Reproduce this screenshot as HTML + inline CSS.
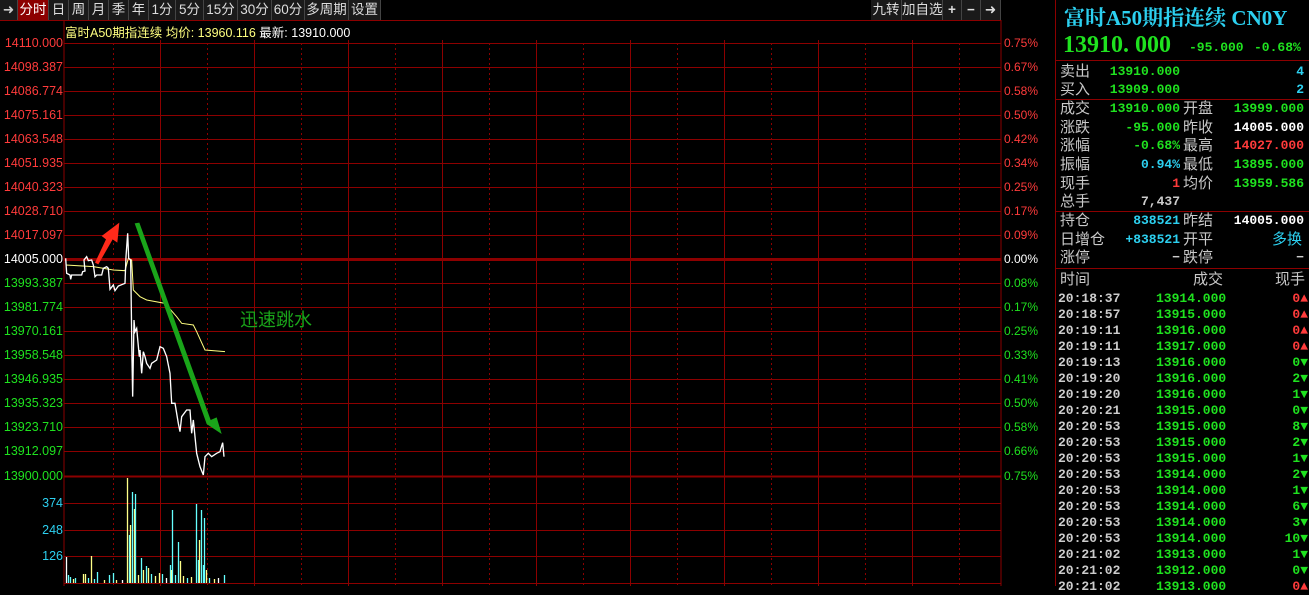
<!DOCTYPE html>
<html><head><meta charset="utf-8"><style>
*{margin:0;padding:0;box-sizing:border-box}
body{width:1309px;height:586px;background:#000;overflow:hidden;position:relative;font-family:"Liberation Sans","Noto Sans CJK SC",sans-serif;}
.t{position:absolute;white-space:nowrap}
.tb{position:absolute;top:0;height:20px;background:#1a1a1a;border-right:1px solid #444;color:#ddd;font-size:13.5px;line-height:20px;text-align:center;white-space:nowrap;overflow:hidden}
.ax{position:absolute;font-size:12.5px;line-height:14px;right:1246px;text-align:right}
.rx{position:absolute;font-size:12px;line-height:14px;left:1004px}
.lb{position:absolute;font-size:15px;color:#c8c8c8;line-height:18px;font-family:"Liberation Sans","WenQuanYi Zen Hei",sans-serif;white-space:nowrap}
.v{position:absolute;font-size:13px;font-weight:bold;line-height:18px;text-align:right;font-family:"Liberation Mono",monospace}
.g{color:#1fe21f}.r{color:#ff3b3b}.w{color:#fff}.c{color:#2cd0f0}
.hl{position:absolute;left:1056px;width:253px;height:1px;background:#8c0000}
</style></head><body>
<div class="tb" style="left:0;width:18px;color:#ccc">➜</div>
<div class="tb" style="left:18px;width:31px;background:#8c0000;color:#fff">分时</div>
<div class="tb" style="left:49px;width:20px">日</div>
<div class="tb" style="left:69px;width:20px">周</div>
<div class="tb" style="left:89px;width:20px">月</div>
<div class="tb" style="left:109px;width:20px">季</div>
<div class="tb" style="left:129px;width:20px">年</div>
<div class="tb" style="left:149px;width:27px">1分</div>
<div class="tb" style="left:176px;width:28px">5分</div>
<div class="tb" style="left:204px;width:34px">15分</div>
<div class="tb" style="left:238px;width:34px">30分</div>
<div class="tb" style="left:272px;width:33px">60分</div>
<div class="tb" style="left:305px;width:44px">多周期</div>
<div class="tb" style="left:349px;width:32px">设置</div>
<div class="tb" style="left:871px;width:31px">九转</div>
<div class="tb" style="left:902px;width:41px">加自选</div>
<div class="tb" style="left:943px;width:19px;font-weight:bold">+</div>
<div class="tb" style="left:962px;width:19px;font-weight:bold">−</div>
<div class="tb" style="left:981px;width:20px">➜</div>
<div style="position:absolute;left:0;top:20px;width:1001px;height:1px;background:#8c0000"></div>
<div class="t" style="left:65px;top:22px;font-size:12.5px;color:#ffff80">富时A50期指连续 均价: 13960.116 <span style="color:#fff">最新: 13910.000</span></div>

<svg style="position:absolute;left:0;top:0" width="1056" height="586">
<g stroke="#8c0000" stroke-width="1">
<line x1="64" y1="20" x2="64" y2="586"/>
<line x1="1001" y1="20" x2="1001" y2="586"/>
<line x1="1056" y1="0" x2="1056" y2="586" stroke-width="2"/>
<line x1="64" y1="43.5" x2="1001" y2="43.5"/><line x1="64" y1="67.5" x2="1001" y2="67.5"/><line x1="64" y1="91.5" x2="1001" y2="91.5"/><line x1="64" y1="115.5" x2="1001" y2="115.5"/><line x1="64" y1="139.5" x2="1001" y2="139.5"/><line x1="64" y1="163.5" x2="1001" y2="163.5"/><line x1="64" y1="187.5" x2="1001" y2="187.5"/><line x1="64" y1="211.5" x2="1001" y2="211.5"/><line x1="64" y1="235.5" x2="1001" y2="235.5"/>
<line x1="64" y1="259.5" x2="1001" y2="259.5" stroke-width="3"/>
<line x1="64" y1="283.5" x2="1001" y2="283.5"/><line x1="64" y1="307.5" x2="1001" y2="307.5"/><line x1="64" y1="331.5" x2="1001" y2="331.5"/><line x1="64" y1="355.5" x2="1001" y2="355.5"/><line x1="64" y1="379.5" x2="1001" y2="379.5"/><line x1="64" y1="403.5" x2="1001" y2="403.5"/><line x1="64" y1="427.5" x2="1001" y2="427.5"/><line x1="64" y1="451.5" x2="1001" y2="451.5"/>
<line x1="64" y1="476.5" x2="1001" y2="476.5" stroke-width="2"/>
<line x1="64" y1="503.5" x2="1001" y2="503.5"/><line x1="64" y1="530.5" x2="1001" y2="530.5"/><line x1="64" y1="556.5" x2="1001" y2="556.5"/><line x1="64" y1="583.5" x2="1001" y2="583.5"/>
<line x1="160.5" y1="40" x2="160.5" y2="586"/><line x1="254.5" y1="40" x2="254.5" y2="586"/><line x1="348.5" y1="40" x2="348.5" y2="586"/><line x1="442.5" y1="40" x2="442.5" y2="586"/><line x1="536.5" y1="40" x2="536.5" y2="586"/><line x1="630.5" y1="40" x2="630.5" y2="586"/><line x1="724.5" y1="40" x2="724.5" y2="586"/><line x1="818.5" y1="40" x2="818.5" y2="586"/><line x1="912.5" y1="40" x2="912.5" y2="586"/>
<g stroke-dasharray="2,3">
<line x1="113.5" y1="43" x2="113.5" y2="586"/><line x1="207.5" y1="43" x2="207.5" y2="586"/><line x1="301.5" y1="43" x2="301.5" y2="586"/><line x1="395.5" y1="43" x2="395.5" y2="586"/><line x1="489.5" y1="43" x2="489.5" y2="586"/><line x1="583.5" y1="43" x2="583.5" y2="586"/><line x1="677.5" y1="43" x2="677.5" y2="586"/><line x1="771.5" y1="43" x2="771.5" y2="586"/><line x1="865.5" y1="43" x2="865.5" y2="586"/><line x1="959.5" y1="43" x2="959.5" y2="586"/>
</g>
</g>
<g transform="translate(0,200) scale(0.33333)" fill="none">
<polyline stroke="#ffff80" stroke-width="3" points="197,195 280,200 340,210 375,212 385,175 395,180 400,270 420,290 440,300 495,310 530,350 545,370 580,375 590,395 615,450 675,455"/>
<polyline stroke="#fff" stroke-width="4" points="197,175 200,220 210,225 212,238 215,225 245,225 248,215 255,213 252,180 260,170 265,182 275,180 280,195 285,230 290,225 305,225 310,205 320,200 325,205 330,268 340,255 345,272 355,258 375,250 378,170 383,100 386,175 392,180 396,480 398,590 402,360 405,395 410,385 418,470 420,450 425,520 430,455 435,470 440,490 450,505 455,490 470,480 480,440 490,445 500,470 510,520 515,610 525,610 535,670 540,695 545,650 560,630 570,630 575,700 580,660 590,760 600,800 610,825 615,770 625,760 635,770 650,760 660,755 668,728 672,770"/>
<polygon fill="#ff2a1a" points="285,188 318,118 305,108 358,68 352,128 338,118 295,193"/>
<polygon fill="#1aa51a" points="404,70 418,68 632,660 650,652 665,702 620,672 618,666"/>
</g>
<g stroke-width="1.3">
<line x1="66.5" y1="583" x2="66.5" y2="557" stroke="#fff"/>
<line x1="68.5" y1="583" x2="68.5" y2="575" stroke="#6ff"/><line x1="70.5" y1="583" x2="70.5" y2="577" stroke="#6ff"/><line x1="73.5" y1="583" x2="73.5" y2="579" stroke="#ff8"/><line x1="75.5" y1="583" x2="75.5" y2="578" stroke="#6ff"/><line x1="83.5" y1="583" x2="83.5" y2="574" stroke="#ff8"/><line x1="85.5" y1="583" x2="85.5" y2="574" stroke="#ff8"/><line x1="88.5" y1="583" x2="88.5" y2="578" stroke="#6ff"/>
<line x1="91.5" y1="583" x2="91.5" y2="556" stroke="#ff8"/><line x1="94.5" y1="583" x2="94.5" y2="579" stroke="#6ff"/><line x1="97.5" y1="583" x2="97.5" y2="572" stroke="#6ff"/><line x1="104.5" y1="583" x2="104.5" y2="580" stroke="#ff8"/><line x1="109.5" y1="583" x2="109.5" y2="575" stroke="#6ff"/><line x1="113.5" y1="583" x2="113.5" y2="573" stroke="#6ff"/><line x1="116.5" y1="583" x2="116.5" y2="580" stroke="#ff8"/><line x1="122.5" y1="583" x2="122.5" y2="580" stroke="#fff"/>
<line x1="127.5" y1="583" x2="127.5" y2="478" stroke="#ff8"/><line x1="129.5" y1="583" x2="129.5" y2="535" stroke="#6ff"/><line x1="130.5" y1="583" x2="130.5" y2="525" stroke="#ff8"/><line x1="132.5" y1="583" x2="132.5" y2="492" stroke="#6ff"/><line x1="134.5" y1="583" x2="134.5" y2="509" stroke="#ff8"/><line x1="135.5" y1="583" x2="135.5" y2="494" stroke="#6ff"/><line x1="138.5" y1="583" x2="138.5" y2="575" stroke="#ff8"/>
<line x1="141.5" y1="583" x2="141.5" y2="558" stroke="#6ff"/><line x1="143.5" y1="583" x2="143.5" y2="570" stroke="#ff8"/><line x1="146.5" y1="583" x2="146.5" y2="566" stroke="#6ff"/><line x1="148.5" y1="583" x2="148.5" y2="568" stroke="#ff8"/><line x1="151.5" y1="583" x2="151.5" y2="574" stroke="#6ff"/><line x1="155.5" y1="583" x2="155.5" y2="576" stroke="#ff8"/><line x1="159.5" y1="583" x2="159.5" y2="573" stroke="#ff8"/><line x1="162.5" y1="583" x2="162.5" y2="574" stroke="#6ff"/><line x1="166.5" y1="583" x2="166.5" y2="578" stroke="#fff"/>
<line x1="170.5" y1="583" x2="170.5" y2="565" stroke="#6ff"/><line x1="171.5" y1="583" x2="171.5" y2="570" stroke="#ff8"/><line x1="172.5" y1="583" x2="172.5" y2="510" stroke="#6ff"/><line x1="175.5" y1="583" x2="175.5" y2="575" stroke="#6ff"/><line x1="178.5" y1="583" x2="178.5" y2="542" stroke="#6ff"/><line x1="180.5" y1="583" x2="180.5" y2="561" stroke="#ff8"/><line x1="183.5" y1="583" x2="183.5" y2="576" stroke="#ff8"/><line x1="187.5" y1="583" x2="187.5" y2="578" stroke="#6ff"/><line x1="191.5" y1="583" x2="191.5" y2="577" stroke="#ff8"/>
<line x1="196.5" y1="583" x2="196.5" y2="504" stroke="#6ff"/><line x1="198.5" y1="583" x2="198.5" y2="560" stroke="#6ff"/><line x1="199.5" y1="583" x2="199.5" y2="540" stroke="#ff8"/><line x1="201.5" y1="583" x2="201.5" y2="510" stroke="#6ff"/><line x1="203.5" y1="583" x2="203.5" y2="565" stroke="#6ff"/><line x1="204.5" y1="583" x2="204.5" y2="518" stroke="#6ff"/><line x1="206.5" y1="583" x2="206.5" y2="570" stroke="#ff8"/><line x1="209.5" y1="583" x2="209.5" y2="578" stroke="#6ff"/><line x1="214.5" y1="583" x2="214.5" y2="579" stroke="#ff8"/><line x1="218.5" y1="583" x2="218.5" y2="578" stroke="#fff"/><line x1="224.5" y1="583" x2="224.5" y2="575" stroke="#6ff"/>
</g>
</svg>
<div class="t" style="left:240px;top:306px;font-size:18px;color:#1aa51a">迅速跳水</div>

<div class="ax r" style="top:36px">14110.000</div>
<div class="ax r" style="top:60px">14098.387</div>
<div class="ax r" style="top:84px">14086.774</div>
<div class="ax r" style="top:108px">14075.161</div>
<div class="ax r" style="top:132px">14063.548</div>
<div class="ax r" style="top:156px">14051.935</div>
<div class="ax r" style="top:180px">14040.323</div>
<div class="ax r" style="top:204px">14028.710</div>
<div class="ax r" style="top:228px">14017.097</div>
<div class="ax w" style="top:252px">14005.000</div>
<div class="ax g" style="top:276px">13993.387</div>
<div class="ax g" style="top:300px">13981.774</div>
<div class="ax g" style="top:324px">13970.161</div>
<div class="ax g" style="top:348px">13958.548</div>
<div class="ax g" style="top:372px">13946.935</div>
<div class="ax g" style="top:396px">13935.323</div>
<div class="ax g" style="top:420px">13923.710</div>
<div class="ax g" style="top:444px">13912.097</div>
<div class="ax g" style="top:469px">13900.000</div>
<div class="ax c" style="top:496px">374</div>
<div class="ax c" style="top:523px">248</div>
<div class="ax c" style="top:549px">126</div>
<div class="rx r" style="top:36px">0.75%</div>
<div class="rx r" style="top:60px">0.67%</div>
<div class="rx r" style="top:84px">0.58%</div>
<div class="rx r" style="top:108px">0.50%</div>
<div class="rx r" style="top:132px">0.42%</div>
<div class="rx r" style="top:156px">0.34%</div>
<div class="rx r" style="top:180px">0.25%</div>
<div class="rx r" style="top:204px">0.17%</div>
<div class="rx r" style="top:228px">0.09%</div>
<div class="rx w" style="top:252px">0.00%</div>
<div class="rx g" style="top:276px">0.08%</div>
<div class="rx g" style="top:300px">0.17%</div>
<div class="rx g" style="top:324px">0.25%</div>
<div class="rx g" style="top:348px">0.33%</div>
<div class="rx g" style="top:372px">0.41%</div>
<div class="rx g" style="top:396px">0.50%</div>
<div class="rx g" style="top:420px">0.58%</div>
<div class="rx g" style="top:444px">0.66%</div>
<div class="rx g" style="top:469px">0.75%</div>

<div class="t" style="left:1064px;top:2px;font-size:21px;font-weight:bold;color:#2cd0f0;font-family:'Liberation Serif','Noto Serif CJK SC',serif">富时A50期指连续 CN0Y</div>
<div class="t g" style="left:1063px;top:32px;font-size:24px;font-weight:bold;font-family:'Liberation Serif',serif">13910. 000</div>
<div class="t g" style="left:1189px;top:40px;font-size:13px;font-family:'Liberation Mono',monospace;font-weight:bold">-95.000</div>
<div class="t g" style="left:1254px;top:40px;font-size:13px;font-family:'Liberation Mono',monospace;font-weight:bold">-0.68%</div>
<div class="hl" style="top:60px"></div>
<div class="lb" style="left:1060px;top:63px">卖出</div><div class="v g" style="left:1100px;top:63px;width:80px">13910.000</div><div class="v c" style="left:1250px;top:63px;width:54px">4</div>
<div class="lb" style="left:1060px;top:81px">买入</div><div class="v g" style="left:1100px;top:81px;width:80px">13909.000</div><div class="v c" style="left:1250px;top:81px;width:54px">2</div>
<div class="hl" style="top:99px"></div>
<div class="lb" style="left:1060px;top:100px">成交</div><div class="v g" style="left:1100px;top:100px;width:80px">13910.000</div><div class="lb" style="left:1183px;top:100px">开盘</div><div class="v g" style="left:1220px;top:100px;width:84px">13999.000</div>
<div class="lb" style="left:1060px;top:119px">涨跌</div><div class="v g" style="left:1100px;top:119px;width:80px">-95.000</div><div class="lb" style="left:1183px;top:119px">昨收</div><div class="v w" style="left:1220px;top:119px;width:84px">14005.000</div>
<div class="lb" style="left:1060px;top:137px">涨幅</div><div class="v g" style="left:1100px;top:137px;width:80px">-0.68%</div><div class="lb" style="left:1183px;top:137px">最高</div><div class="v r" style="left:1220px;top:137px;width:84px">14027.000</div>
<div class="lb" style="left:1060px;top:156px">振幅</div><div class="v c" style="left:1100px;top:156px;width:80px">0.94%</div><div class="lb" style="left:1183px;top:156px">最低</div><div class="v g" style="left:1220px;top:156px;width:84px">13895.000</div>
<div class="lb" style="left:1060px;top:175px">现手</div><div class="v r" style="left:1100px;top:175px;width:80px">1</div><div class="lb" style="left:1183px;top:175px">均价</div><div class="v g" style="left:1220px;top:175px;width:84px">13959.586</div>
<div class="lb" style="left:1060px;top:193px">总手</div><div class="v" style="left:1100px;top:193px;width:80px;color:#ccc">7,437</div>
<div class="hl" style="top:211px"></div>
<div class="lb" style="left:1060px;top:212px">持仓</div><div class="v c" style="left:1100px;top:212px;width:80px">838521</div><div class="lb" style="left:1183px;top:212px">昨结</div><div class="v w" style="left:1220px;top:212px;width:84px">14005.000</div>
<div class="lb" style="left:1060px;top:231px">日增仓</div><div class="v c" style="left:1100px;top:231px;width:80px">+838521</div><div class="lb" style="left:1183px;top:231px">开平</div><div class="lb" style="left:1272px;top:231px;color:#2cd0f0">多换</div>
<div class="lb" style="left:1060px;top:249px">涨停</div><div class="v" style="left:1100px;top:249px;width:80px;color:#ccc">−</div><div class="lb" style="left:1183px;top:249px">跌停</div><div class="v" style="left:1220px;top:249px;width:84px;color:#ccc">−</div>
<div class="hl" style="top:268px"></div>
<div class="lb" style="left:1060px;top:271px">时间</div><div class="lb" style="left:1193px;top:271px">成交</div><div class="lb" style="left:1275px;top:271px">现手</div>
<div style="position:absolute;left:1058px;top:291px;width:250px;font-family:'Liberation Mono',monospace;font-size:13px;font-weight:bold;line-height:16px">
<div style="display:flex;height:16px"><span style="color:#ccc;width:98px">20:18:37</span><span class="g" style="width:96px">13914.000</span><span class="r" style="flex:1;text-align:right">0▲</span></div>
<div style="display:flex;height:16px"><span style="color:#ccc;width:98px">20:18:57</span><span class="g" style="width:96px">13915.000</span><span class="r" style="flex:1;text-align:right">0▲</span></div>
<div style="display:flex;height:16px"><span style="color:#ccc;width:98px">20:19:11</span><span class="g" style="width:96px">13916.000</span><span class="r" style="flex:1;text-align:right">0▲</span></div>
<div style="display:flex;height:16px"><span style="color:#ccc;width:98px">20:19:11</span><span class="g" style="width:96px">13917.000</span><span class="r" style="flex:1;text-align:right">0▲</span></div>
<div style="display:flex;height:16px"><span style="color:#ccc;width:98px">20:19:13</span><span class="g" style="width:96px">13916.000</span><span class="g" style="flex:1;text-align:right">0▼</span></div>
<div style="display:flex;height:16px"><span style="color:#ccc;width:98px">20:19:20</span><span class="g" style="width:96px">13916.000</span><span class="g" style="flex:1;text-align:right">2▼</span></div>
<div style="display:flex;height:16px"><span style="color:#ccc;width:98px">20:19:20</span><span class="g" style="width:96px">13916.000</span><span class="g" style="flex:1;text-align:right">1▼</span></div>
<div style="display:flex;height:16px"><span style="color:#ccc;width:98px">20:20:21</span><span class="g" style="width:96px">13915.000</span><span class="g" style="flex:1;text-align:right">0▼</span></div>
<div style="display:flex;height:16px"><span style="color:#ccc;width:98px">20:20:53</span><span class="g" style="width:96px">13915.000</span><span class="g" style="flex:1;text-align:right">8▼</span></div>
<div style="display:flex;height:16px"><span style="color:#ccc;width:98px">20:20:53</span><span class="g" style="width:96px">13915.000</span><span class="g" style="flex:1;text-align:right">2▼</span></div>
<div style="display:flex;height:16px"><span style="color:#ccc;width:98px">20:20:53</span><span class="g" style="width:96px">13915.000</span><span class="g" style="flex:1;text-align:right">1▼</span></div>
<div style="display:flex;height:16px"><span style="color:#ccc;width:98px">20:20:53</span><span class="g" style="width:96px">13914.000</span><span class="g" style="flex:1;text-align:right">2▼</span></div>
<div style="display:flex;height:16px"><span style="color:#ccc;width:98px">20:20:53</span><span class="g" style="width:96px">13914.000</span><span class="g" style="flex:1;text-align:right">1▼</span></div>
<div style="display:flex;height:16px"><span style="color:#ccc;width:98px">20:20:53</span><span class="g" style="width:96px">13914.000</span><span class="g" style="flex:1;text-align:right">6▼</span></div>
<div style="display:flex;height:16px"><span style="color:#ccc;width:98px">20:20:53</span><span class="g" style="width:96px">13914.000</span><span class="g" style="flex:1;text-align:right">3▼</span></div>
<div style="display:flex;height:16px"><span style="color:#ccc;width:98px">20:20:53</span><span class="g" style="width:96px">13914.000</span><span class="g" style="flex:1;text-align:right">10▼</span></div>
<div style="display:flex;height:16px"><span style="color:#ccc;width:98px">20:21:02</span><span class="g" style="width:96px">13913.000</span><span class="g" style="flex:1;text-align:right">1▼</span></div>
<div style="display:flex;height:16px"><span style="color:#ccc;width:98px">20:21:02</span><span class="g" style="width:96px">13912.000</span><span class="g" style="flex:1;text-align:right">0▼</span></div>
<div style="display:flex;height:16px"><span style="color:#ccc;width:98px">20:21:02</span><span class="g" style="width:96px">13913.000</span><span class="r" style="flex:1;text-align:right">0▲</span></div>
</div>
</body></html>
